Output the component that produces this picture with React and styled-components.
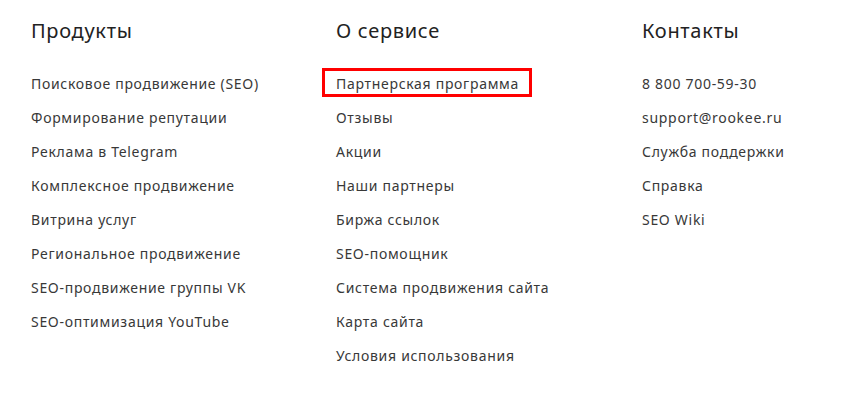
import React from 'react'
import styled, { createGlobalStyle } from 'styled-components'

const GlobalStyle = createGlobalStyle`
  body {
    margin: 0;
    background: #fff;
    font-family: 'Noto Sans', 'DejaVu Sans', sans-serif;
  }
`

const Footer = styled.footer`
  display: grid;
  grid-template-columns: 305px 306px 1fr;
  padding: 18px 31px 0;
`

const Column = styled.div`
  display: flex;
  flex-direction: column;
`

const Heading = styled.h3`
  margin: 0 0 30px;
  font-size: 20px;
  font-weight: 400;
  line-height: 26px;
  letter-spacing: 0.7px;
  color: #222;
`

const Links = styled.ul`
  list-style: none;
  margin: 0;
  padding: 0;
  display: flex;
  flex-direction: column;
  gap: 14px;
`

const Item = styled.li`
  display: flex;
  line-height: 20px;
`

const Link = styled.a`
  font-size: 14px;
  letter-spacing: 0.7px;
  color: #383838;
  text-decoration: none;
  outline: ${p => (p.$marked ? '3px solid #f00' : 'none')};
  padding: ${p => (p.$marked ? '3px 10px 0 11px' : '0')};
  margin: ${p => (p.$marked ? '-3px -10px 0 -11px' : '0')};
`

const columns = [
  {
    title: 'Продукты',
    links: [
      'Поисковое продвижение (SEO)',
      'Формирование репутации',
      'Реклама в Telegram',
      'Комплексное продвижение',
      'Витрина услуг',
      'Региональное продвижение',
      'SEO-продвижение группы VK',
      'SEO-оптимизация YouTube',
    ],
  },
  {
    title: 'О сервисе',
    links: [
      'Партнерская программа',
      'Отзывы',
      'Акции',
      'Наши партнеры',
      'Биржа ссылок',
      'SEO-помощник',
      'Система продвижения сайта',
      'Карта сайта',
      'Условия использования',
    ],
  },
  {
    title: 'Контакты',
    links: [
      '8 800 700-59-30',
      'support@rookee.ru',
      'Служба поддержки',
      'Справка',
      'SEO Wiki',
    ],
  },
]

export default () => (
  <>
    <GlobalStyle />
    <Footer>
      {columns.map(col => (
        <Column key={col.title}>
          <Heading>{col.title}</Heading>
          <Links>
            {col.links.map(text => (
              <Item key={text}>
                <Link href="#" $marked={text === 'Партнерская программа'}>
                  {text}
                </Link>
              </Item>
            ))}
          </Links>
        </Column>
      ))}
    </Footer>
  </>
)
